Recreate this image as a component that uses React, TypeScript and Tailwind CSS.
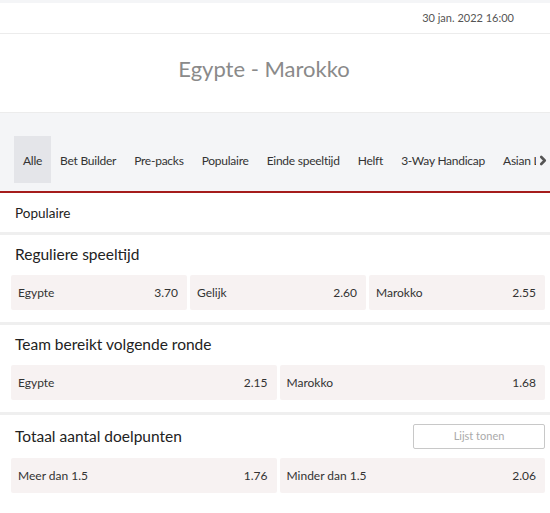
import { ChevronRight } from "lucide-react";

const tabs = ["Alle", "Bet Builder", "Pre-packs", "Populaire", "Einde speeltijd", "Helft", "3-Way Handicap", "Asian Lines", "Correcte score"];

type Odd = { label: string; price: string };

function OddBox({ label, price }: Odd) {
  return (
    <div className="flex-1 h-[35px] bg-[#f7f2f2] rounded-[2px] flex items-center justify-between pl-[7px] pr-[9px] text-[12px] text-[#333]">
      <span>{label}</span>
      <span>{price}</span>
    </div>
  );
}

function Market({ title, odds, list }: { title: string; odds: Odd[]; list?: boolean }) {
  return (
    <section className="bg-white border-t-[3px] border-[#efefef] pb-[12px]">
      <div className={`${list ? "h-[43px]" : "h-[40px]"} flex items-center justify-between pl-[15px] pr-[5px]`}>
        <h2 className="text-[15.5px] text-[#222] leading-none">{title}</h2>
        {list && (
          <button className="w-[132px] h-[25px] border border-[#c8c8c8] rounded-[2px] text-[11px] text-[#aaa] bg-white">
            Lijst tonen
          </button>
        )}
      </div>
      <div className="flex gap-[3px] pl-[11px] pr-[5px]">
        {odds.map((o) => (
          <OddBox key={o.label} {...o} />
        ))}
      </div>
    </section>
  );
}

export default function App() {
  return (
    <div className="w-[550px] h-[513px] overflow-hidden bg-white font-['Lato',sans-serif]">
      <div className="h-[3px] bg-[#f4f5f7]" />
      <header className="bg-white h-[31px] flex items-center justify-end pr-[36px] text-[11px] text-[#555] border-b border-[#ececec]">
        30 jan. 2022 16:00
      </header>
      <div className="bg-white h-[78px] flex items-center justify-center pb-[8px] pr-[22px]">
        <h1 className="text-[22px] text-[#8a8a8a] leading-none">Egypte - Marokko</h1>
      </div>

      <div className="relative h-[81px] bg-[#f4f5f7] border-t border-[#ececec] pt-[23px] border-b-2 border-b-[#a51c1c]">
        <div className="flex pl-[14px] overflow-hidden whitespace-nowrap">
          {tabs.map((t, i) => (
            <div
              key={t}
              className={`h-[47px] flex items-center pt-[2px] px-[9px] text-[12px] tracking-[-0.25px] text-[#333] ${i === 0 ? "bg-[#e4e5e9]" : ""}`}
            >
              {t}
            </div>
          ))}
        </div>
        <div className="absolute right-0 top-[23px] h-[47px] w-[14px] bg-[#f4f5f7] flex items-center justify-end pt-[2px]">
          <ChevronRight className="w-[14px] h-[17px] text-[#555]" strokeWidth={4.5} />
        </div>
      </div>

      <div className="bg-white h-[39px] flex items-center pl-[15px] pt-[2px] text-[13.5px] text-[#222]">Populaire</div>

      <Market
        title="Reguliere speeltijd"
        odds={[
          { label: "Egypte", price: "3.70" },
          { label: "Gelijk", price: "2.60" },
          { label: "Marokko", price: "2.55" },
        ]}
      />
      <Market
        title="Team bereikt volgende ronde"
        odds={[
          { label: "Egypte", price: "2.15" },
          { label: "Marokko", price: "1.68" },
        ]}
      />
      <Market
        title="Totaal aantal doelpunten"
        list
        odds={[
          { label: "Meer dan 1.5", price: "1.76" },
          { label: "Minder dan 1.5", price: "2.06" },
        ]}
      />
    </div>
  );
}
